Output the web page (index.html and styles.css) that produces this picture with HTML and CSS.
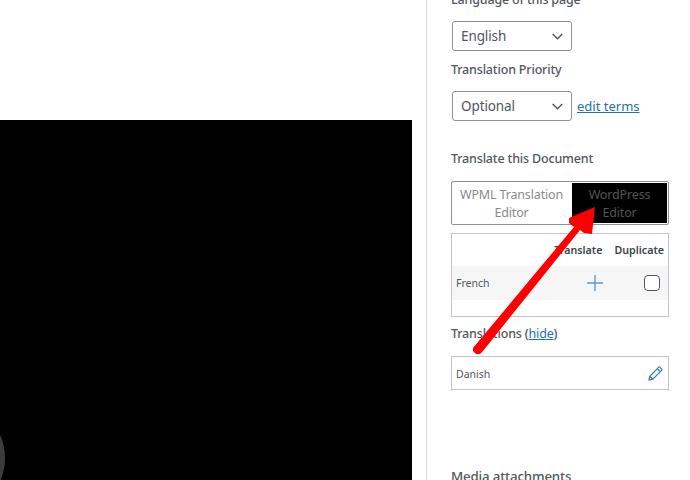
FILE: index.html
```html
<!DOCTYPE html>
<html lang="en">
<head>
<meta charset="utf-8">
<title>Translate this Document</title>
<link rel="stylesheet" href="styles.css">
</head>
<body>
<div class="page">
  <main class="main">
    <div class="video">
      <div class="spinner"></div>
    </div>
  </main>
  <aside class="side">
    <p class="label first">Language of this page</p>
    <div class="select select-lang"><span>English</span><svg class="chev" width="11" height="7" viewBox="0 0 11 7"><path d="M.7 1 5.500 5.700 10.300 1" fill="none" stroke="#50575e" stroke-width="1.500"/></svg></div>
    <p class="label prio">Translation Priority</p>
    <div class="row">
      <div class="select"><span>Optional</span><svg class="chev" width="11" height="7" viewBox="0 0 11 7"><path d="M.7 1 5.500 5.700 10.300 1" fill="none" stroke="#50575e" stroke-width="1.500"/></svg></div>
      <a class="link" href="#">edit terms</a>
    </div>
    <p class="label doc">Translate this Document</p>
    <div class="tabs">
      <div class="tab">WPML Translation Editor</div>
      <div class="tab active">WordPress Editor</div>
    </div>
    <div class="table">
      <div class="thead"><span>Translate</span><span>Duplicate</span></div>
      <div class="trow">
        <span class="lang">French</span>
        <svg class="plus" width="16" height="16" viewBox="0 0 16 16"><path d="M8 0v16M0 8h16" stroke="#5b9bd1" stroke-width="1.400"/></svg>
        <span class="check"></span>
      </div>
    </div>
    <p class="label trans">Translations (<a class="link plain" href="#">hide</a>)</p>
    <div class="done">
      <div class="done-row">
        <span class="lang lang-done">Danish</span>
        <svg class="pen" width="15" height="15" viewBox="0 0 15 15"><path d="M1 14l.8-3.800L10.600 1.400a1 1 0 0 1 1.400 0l1.600 1.600a1 1 0 0 1 0 1.400L4.800 13.200zM1.800 10.200l3 3M9.300 2.700l3 3" fill="none" stroke="#3d7fc1" stroke-width="1.300"/></svg>
      </div>
    </div>
    <p class="label media">Media attachments</p>
  </aside>
</div>
<svg class="arrow" width="690" height="480" viewBox="0 0 690 480"><path d="M473 348 574 227 569 223 569 218 595 207 592 234 584 233 580 230 483 351 480 354 476 354 473 351Z" fill="#f00"/></svg>
</body>
</html>
```

FILE: styles.css
```css
html, body {
  margin: 0;
  height: 100%;
  overflow: hidden;
  background: #fff;
}
body {
  position: relative;
  font-family: "Noto Sans", "Open Sans", sans-serif;
  color: #50575e;
}
.page {
  display: flex;
  height: 480px;
}
.main {
  width: 412px;
  padding-top: 120px;
  box-sizing: border-box;
  flex: none;
}
.video {
  height: 360px;
  background: #000;
  position: relative;
  overflow: hidden;
}
.spinner {
  position: absolute;
  left: -105px;
  top: 283px;
  width: 110px;
  height: 110px;
  box-sizing: border-box;
  border-radius: 50%;
  border: 5px solid #3c3c3c;
}
.side {
  margin-left: 14px;
  border-left: 1px solid #dcdcde;
  padding-left: 24px;
  width: 218px;
  flex: none;
  height: 480px;
  overflow: hidden;
}
.label {
  margin: 0;
  font-size: 12.500px;
  letter-spacing: -0.170px;
  line-height: 18px;
  font-weight: 500;
  color: #50575e;
}
.first { margin-top: -9px; }
.select {
  width: 120px;
  height: 30px;
  margin-left: 1px;
  box-sizing: border-box;
  border: 1px solid #8c8f94;
  border-radius: 3px;
  display: flex;
  align-items: center;
  justify-content: space-between;
  padding: 0 8px 0 8px;
  font-size: 13.500px;
  letter-spacing: -0.100px;
  color: #50575e;
  background: #fff;
}
.select-lang { margin-top: 12px; }
.prio { margin-top: 10px; }
.row {
  display: flex;
  align-items: center;
  gap: 5px;
  margin-top: 12px;
}
.link {
  color: #2271b1;
  font-size: 13px;
  text-decoration: underline;
}
.plain {
  font-size: 12.500px;
  font-weight: 400;
}
.doc { margin-top: 29px; }
.tabs {
  display: flex;
  width: 218px;
  height: 44px;
  box-sizing: border-box;
  border: 1px solid #8c8f94;
  border-radius: 2px;
  margin-top: 13px;
}
.tab {
  flex: 1;
  font-size: 12.500px;
  letter-spacing: -0.150px;
  line-height: 18px;
  text-align: center;
  padding-top: 4px;
  color: #8a8a8a;
}
.tab:first-child {
  flex: 0 0 119px;
  padding-left: 3px;
  padding-right: 3px;
  box-sizing: border-box;
}
.active {
  background: #000;
  color: #555;
  margin: 1px;
  padding-top: 3px;
}
.table {
  width: 218px;
  height: 84px;
  box-sizing: border-box;
  border: 1px solid #c3c4d0;
  margin-top: 8px;
}
.thead {
  height: 32px;
  display: flex;
  justify-content: flex-end;
  align-items: center;
  font-size: 10.700px;
  font-weight: 600;
  gap: 12px;
  padding-right: 4px;
  color: #3c434a;
}
.trow {
  height: 34px;
  background: #f6f6f6;
  display: flex;
  align-items: center;
  padding: 0 8px 0 4px;
}
.lang {
  font-size: 10.500px;
  color: #50575e;
}
.lang-done { padding-top: 2px; }
.plus {
  margin-left: auto;
  margin-right: 41px;
}
.check {
  width: 16px;
  height: 16px;
  box-sizing: border-box;
  border: 1px solid #50575e;
  border-radius: 4px;
  background: #fff;
}
.trans { margin-top: 8px; }
.done {
  width: 218px;
  height: 35px;
  box-sizing: border-box;
  border: 1px solid #c3c4d0;
  border-bottom: 0;
  margin-top: 13px;
  padding-bottom: 1px;
}
.done-row {
  height: 33px;
  box-sizing: border-box;
  border-bottom: 1px solid #c3c4d0;
  display: flex;
  align-items: center;
  justify-content: space-between;
  padding: 0 5px 0 4px;
}
.media {
  margin-top: 76px;
  font-size: 13.300px;
}
.arrow {
  position: absolute;
  left: 0;
  top: 0;
  pointer-events: none;
}
```
